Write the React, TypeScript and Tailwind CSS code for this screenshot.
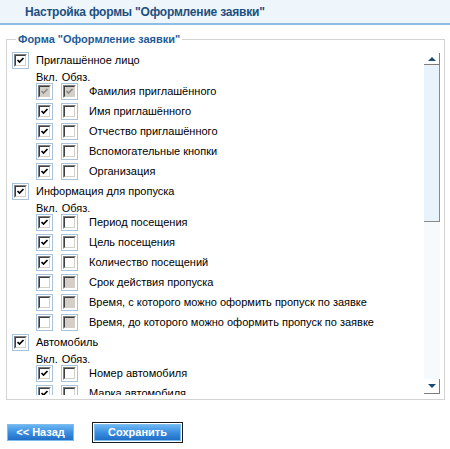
type Box = "on" | "off" | "dis-on" | "dis-off";

type Field = { label: string; inc: Box; req: Box };
type Group = { title: string; fields: Field[] };

const groups: Group[] = [
  {
    title: "Приглашённое лицо",
    fields: [
      { label: "Фамилия приглашённого", inc: "dis-on", req: "dis-on" },
      { label: "Имя приглашённого", inc: "on", req: "off" },
      { label: "Отчество приглашённого", inc: "on", req: "off" },
      { label: "Вспомогательные кнопки", inc: "on", req: "off" },
      { label: "Организация", inc: "on", req: "off" },
    ],
  },
  {
    title: "Информация для пропуска",
    fields: [
      { label: "Период посещения", inc: "on", req: "off" },
      { label: "Цель посещения", inc: "on", req: "off" },
      { label: "Количество посещений", inc: "on", req: "off" },
      { label: "Срок действия пропуска", inc: "off", req: "dis-off" },
      { label: "Время, с которого можно оформить пропуск по заявке", inc: "off", req: "dis-off" },
      { label: "Время, до которого можно оформить пропуск по заявке", inc: "off", req: "dis-off" },
    ],
  },
  {
    title: "Автомобиль",
    fields: [
      { label: "Номер автомобиля", inc: "on", req: "off" },
      { label: "Марка автомобиля", inc: "on", req: "off" },
      { label: "Цвет автомобиля", inc: "on", req: "off" },
    ],
  },
];

function Check({ state }: { state: Box }) {
  const disabled = state === "dis-on" || state === "dis-off";
  const checked = state === "on" || state === "dis-on";
  return (
    <div className="w-[17px] h-[17px] shrink-0 border border-[#a9c3dd] p-[1px]">
      <div className="w-[13px] h-[13px] border-t border-l border-[#7f7f7f] border-r border-b border-r-white border-b-white">
        <div
          className={
            "w-[11px] h-[11px] border-t border-l border-[#3f3f3f] border-r border-b border-r-[#d4d0c8] border-b-[#d4d0c8] flex items-center justify-center " +
            (disabled ? "bg-[#d4d0c8]" : "bg-white")
          }
        >
          {checked && (
            <svg width="9" height="9" viewBox="0 0 9 9">
              <path
                d="M1.5 4 L3.5 6 L7.5 2"
                fill="none"
                stroke={disabled ? "#8a8a8a" : "#000"}
                strokeWidth="1.7"
              />
            </svg>
          )}
        </div>
      </div>
    </div>
  );
}

function Btn({ children, focused }: { children: React.ReactNode; focused?: boolean }) {
  const inner = (
    <div className="h-[17px] flex items-center justify-center whitespace-nowrap border border-[#7fbcee] bg-gradient-to-b from-[#6ab6f2] via-[#3b8fe0] to-[#1f6fc6] text-white font-bold text-[11px]">
      {children}
    </div>
  );
  if (focused) {
    return <div className="border border-[#1b1b1b] p-[1px] w-[91px]">{inner}</div>;
  }
  return <div className="w-[67px]">{inner}</div>;
}

export default function App() {
  return (
    <div
      className="w-[450px] h-[449px] bg-white text-[11px] text-black overflow-hidden"
      style={{ fontFamily: '"Liberation Sans", Arial, sans-serif' }}
    >
      <div className="h-[25px] bg-[#eef5fb] border-b-2 border-[#8dbde3] pl-[25px] pt-[5px]">
        <h1 className="text-[12px] leading-[15px] font-bold tracking-[-0.2px] text-[#1d4f7e]">
          Настройка формы "Оформление заявки"
        </h1>
      </div>

      <fieldset className="mt-[8px] ml-[6px] w-[439px] h-[367px] border border-[#d3d3d3] px-0 pb-[3px]">
        <legend className="ml-[9px] px-[2px] text-[11px] leading-[13px] font-bold text-[#1f5b96]">
          Форма "Оформление заявки"
        </legend>
        <div className="mt-[6px] h-[343px] flex mr-[4px]">
          <div className="flex-1 overflow-hidden pl-[5px]">
            {groups.map((g) => (
              <div key={g.title}>
                <div className="flex items-start h-[20px] gap-[7px]">
                  <Check state="on" />
                  <span className="leading-[17px]">{g.title}</span>
                </div>
                <div className="h-[11px] leading-[11px] pl-[24px] flex gap-[4px]">
                  <span>Вкл.</span>
                  <span>Обяз.</span>
                </div>
                {g.fields.map((f) => (
                  <div key={f.label} className="flex items-start h-[20px] pl-[24px]">
                    <Check state={f.inc} />
                    <div className="ml-[8px]">
                      <Check state={f.req} />
                    </div>
                    <span className="ml-[11px] leading-[17px] whitespace-nowrap">{f.label}</span>
                  </div>
                ))}
              </div>
            ))}
          </div>
          <div className="w-[16px] flex flex-col mt-[1px] mb-[1px]">
            <div className="h-[12px] bg-white border-r border-b border-[#7c7c7c] flex items-center justify-center">
              <svg width="8" height="4" viewBox="0 0 8 4">
                <path d="M0 4 L4 0 L8 4 Z" fill="#1b4a73" />
              </svg>
            </div>
            <div className="h-[157px] bg-[#e9f3fb] border-r border-b border-[#8a8a8a]" />
            <div className="flex-1 bg-[#f7fafc]" />
            <div className="h-[15px] bg-white border-r border-b border-[#7c7c7c] flex items-center justify-center">
              <svg width="8" height="4" viewBox="0 0 8 4">
                <path d="M0 0 L8 0 L4 4 Z" fill="#1b4a73" />
              </svg>
            </div>
          </div>
        </div>
      </fieldset>

      <div className="flex items-center gap-[18px] pl-[7px] mt-[22px]">
        <Btn>&lt;&lt; Назад</Btn>
        <Btn focused>Сохранить</Btn>
      </div>
    </div>
  );
}
